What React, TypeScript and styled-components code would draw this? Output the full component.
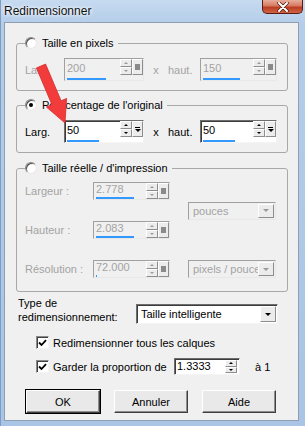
import React from 'react'
import styled, { createGlobalStyle } from 'styled-components'

const GlobalStyle = createGlobalStyle`
  html, body {
    margin: 0;
    padding: 0;
  }
  body {
    width: 305px;
    height: 426px;
    overflow: hidden;
    font-family: "Liberation Sans", Arial, sans-serif;
    font-size: 11px;
    color: #000;
  }
`

const GREY = '#a3a3a3'

const Window = styled.div`
  position: relative;
  width: 305px;
  height: 426px;
  box-sizing: border-box;
  display: flex;
  flex-direction: column;
  border-left: 1px solid #7f9dc4;
  background: linear-gradient(180deg, #c6daf0 0px, #b4cde9 24px, #a9c4e4 100%);
`

const TitleBar = styled.div`
  height: 22px;
  display: flex;
  align-items: flex-start;
  padding-left: 3px;
`

const Title = styled.span`
  font-size: 12px;
  line-height: 14px;
  padding-top: 4px;
  color: #111;
  text-shadow: 0 0 5px #fff, 0 0 3px #fff;
`

const CloseButton = styled.div`
  margin-left: auto;
  margin-right: 2px;
  width: 41px;
  height: 14px;
  box-sizing: border-box;
  border: 1px solid #5a1d14;
  border-top: none;
  border-radius: 0 0 5px 5px;
  background: linear-gradient(180deg, #e8ad9b 0%, #d67a61 45%, #bb3d22 55%, #cf6246 100%);
  display: flex;
  align-items: center;
  justify-content: center;
`

const Client = styled.div`
  flex: 1;
  margin: 0 6px 5px 3px;
  border: 1px solid #8e9fb3;
  background: #f0f0f0;
  padding: 13px 10px 0 11px;
  display: flex;
  flex-direction: column;
`

const Group = styled.fieldset<{ $top: number; $bottom: number }>`
  margin: ${({ $top }) => $top}px 0 0;
  padding: 0 8px ${({ $bottom }) => $bottom}px 8px;
  border: 1px solid #a8a8a8;
  border-radius: 3px;
  min-width: 0;
`

const Legend = styled.legend<{ $pad: number }>`
  display: flex;
  align-items: center;
  gap: 5px;
  height: 14px;
  line-height: 14px;
  padding: 0 4px 0 0;
  margin-bottom: ${({ $pad }) => $pad}px;
`

const PairRow = styled.div`
  display: grid;
  grid-template-columns: 39px 80px 24px 32px 77px;
  align-items: center;
`

const PrintGrid = styled.div`
  display: grid;
  grid-template-columns: 68px 77px 18px 88px;
  grid-template-rows: 18px 18px 18px;
  row-gap: 21px;
  align-items: center;
`

const Label = styled.span<{ $off?: boolean }>`
  color: ${({ $off }) => ($off ? GREY : '#000')};
  white-space: nowrap;
`

const Times = styled(Label)`
  text-align: center;
`

const SpinBox = styled.div<{ $off?: boolean; $w: number; $h: number }>`
  width: ${({ $w }) => $w}px;
  height: ${({ $h }) => $h}px;
  box-sizing: border-box;
  display: flex;
  align-items: flex-start;
  border: 1px solid;
  border-color: ${({ $off }) => ($off ? '#a0a0a0 #e8e8e8 #e8e8e8 #a0a0a0' : '#6d6d6d #f4f4f4 #f4f4f4 #6d6d6d')};
  box-shadow: ${({ $off }) => ($off ? 'none' : 'inset 1px 1px 0 #3c3c3c')};
  background: ${({ $off }) => ($off ? '#f0f0f0' : '#fff')};
`

const TextPart = styled.div`
  flex: 1;
  align-self: stretch;
  display: flex;
  flex-direction: column;
  padding-left: 2px;
`

const Value = styled.span<{ $off?: boolean; $lh: number }>`
  line-height: ${({ $lh }) => $lh}px;
  color: ${({ $off }) => ($off ? GREY : '#000')};
`

const Bar = styled.div`
  margin-top: auto;
  height: 2px;
  background: #3399ff;
`

const SpinColumn = styled.div`
  width: 12px;
  height: 16px;
  display: flex;
  flex-direction: column;
`

const FaceButton = styled.div`
  flex: 1;
  box-sizing: border-box;
  display: flex;
  align-items: center;
  justify-content: center;
  background: #ececec;
  border: 1px solid;
  border-color: #fff #8d8d8d #8d8d8d #fff;
`

const SideButton = styled(FaceButton)`
  flex: none;
  width: 11px;
  height: 16px;
  flex-direction: column;
  gap: 1px;
`

const Tri = styled.span<{ $up?: boolean; $off?: boolean; $size?: number }>`
  width: 0;
  height: 0;
  border-left: ${({ $size = 2 }) => $size}px solid transparent;
  border-right: ${({ $size = 2 }) => $size}px solid transparent;
  ${({ $up, $off, $size = 2 }) =>
    $up
      ? `border-bottom: ${$size}px solid ${$off ? '#9a9a9a' : '#000'};`
      : `border-top: ${$size}px solid ${$off ? '#9a9a9a' : '#000'};`}
`

const Dash = styled.span`
  width: 5px;
  height: 1px;
  background: #000;
`

const Dot = styled.span`
  width: 5px;
  height: 6px;
  background: #8a8a8a;
`

const Combo = styled.div<{ $off?: boolean; $h: number }>`
  height: ${({ $h }) => $h}px;
  box-sizing: border-box;
  display: flex;
  align-items: stretch;
  border: 1px solid;
  border-color: ${({ $off }) => ($off ? '#a0a0a0 #e8e8e8 #e8e8e8 #a0a0a0' : '#6d6d6d #f4f4f4 #f4f4f4 #6d6d6d')};
  box-shadow: ${({ $off }) => ($off ? 'none' : 'inset 1px 1px 0 #3c3c3c')};
  background: ${({ $off }) => ($off ? '#f0f0f0' : '#fff')};
  overflow: hidden;
`

const ComboText = styled.span<{ $off?: boolean }>`
  flex: 1;
  display: flex;
  align-items: center;
  padding-left: 4px;
  white-space: nowrap;
  overflow: hidden;
  color: ${({ $off }) => ($off ? GREY : '#000')};
`

const ComboButton = styled(FaceButton)`
  flex: none;
  width: 16px;
  margin: 1px 1px 1px 0;
`

const RadioDot = styled.span<{ $on?: boolean }>`
  width: 12px;
  height: 12px;
  box-sizing: border-box;
  border-radius: 50%;
  border: 1px solid;
  border-color: #8a8a8a #e8e8e8 #e8e8e8 #8a8a8a;
  box-shadow: inset 1px 1px 0 #505050;
  background: #fff;
  display: flex;
  align-items: center;
  justify-content: center;
  &::after {
    content: '';
    width: 4px;
    height: 4px;
    border-radius: 50%;
    background: ${({ $on }) => ($on ? '#000' : 'transparent')};
  }
`

const Footer = styled.div`
  display: flex;
  flex-direction: column;
`

const TypeRow = styled.div`
  margin-top: 4px;
  display: grid;
  grid-template-columns: 120px 142px;
  align-items: end;
`

const TypeLabel = styled.span`
  padding-left: 2px;
  line-height: 14px;
`

const CheckRow = styled.div<{ $top: number }>`
  margin-top: ${({ $top }) => $top}px;
  padding-left: 20px;
  height: 17px;
  display: flex;
  align-items: center;
`

const CheckBox = styled.span`
  width: 13px;
  height: 13px;
  box-sizing: border-box;
  border: 1px solid;
  border-color: #8a8a8a #f4f4f4 #f4f4f4 #8a8a8a;
  box-shadow: inset 1px 1px 0 #404040;
  background: #fff;
  margin-right: 4px;
  display: flex;
  align-items: center;
  justify-content: center;
`

const CheckText = styled.span<{ $w?: number }>`
  width: ${({ $w }) => ($w ? `${$w}px` : 'auto')};
  white-space: nowrap;
`

const RatioBox = styled(SpinBox)`
  align-items: stretch;
`

const RatioValue = styled.span`
  flex: 1;
  padding-left: 2px;
  line-height: 15px;
`

const RatioSpin = styled(SpinColumn)`
  height: auto;
  margin: 1px 2px 1px 0;
`

const Suffix = styled.span`
  margin-left: 15px;
`

const Buttons = styled.div`
  margin-top: 15px;
  padding-left: 10px;
  display: flex;
  gap: 14px;
`

const PushButton = styled.button<{ $default?: boolean }>`
  width: 74px;
  height: 23px;
  box-sizing: border-box;
  padding: 0;
  font-family: "Liberation Sans", Arial, sans-serif;
  font-size: 11px;
  color: #000;
  background: #e9e9e9;
  border: 1px solid;
  border-color: #fff #404040 #404040 #fff;
  box-shadow: ${({ $default }) =>
    $default ? '0 0 0 1px #000, inset -1px -1px 0 #8d8d8d' : 'inset -1px -1px 0 #8d8d8d'};
`

const Overlay = styled.svg`
  position: absolute;
  left: 0;
  top: 0;
  pointer-events: none;
`

function SpinField({ value, off, fill, w, h, popup }: { value: string; off?: boolean; fill: number; w: number; h: number; popup?: boolean }) {
  return (
    <SpinBox $off={off} $w={w} $h={h}>
      <TextPart>
        <Value $off={off} $lh={h - 5}>{value}</Value>
        <Bar style={{ width: fill }} />
      </TextPart>
      <SpinColumn>
        <FaceButton><Tri $up $off={off} /></FaceButton>
        <FaceButton><Tri $off={off} /></FaceButton>
      </SpinColumn>
      <SideButton>
        {popup ? (
          <>
            <Dash />
            <Tri $size={3} />
          </>
        ) : (
          <Dot />
        )}
      </SideButton>
    </SpinBox>
  )
}

function Dropdown({ text, off, h }: { text: string; off?: boolean; h: number }) {
  return (
    <Combo $off={off} $h={h}>
      <ComboText $off={off}>{text}</ComboText>
      <ComboButton>
        <Tri $off={off} $size={3.5} />
      </ComboButton>
    </Combo>
  )
}

function Check({ children, top, w, extra }: { children: React.ReactNode; top: number; w?: number; extra?: React.ReactNode }) {
  return (
    <CheckRow $top={top}>
      <CheckBox>
        <svg width="9" height="8" viewBox="0 0 9 8">
          <path d="M1 3.5 L3.5 6 L8 1.2" fill="none" stroke="#000" strokeWidth="1.8" />
        </svg>
      </CheckBox>
      <CheckText $w={w}>{children}</CheckText>
      {extra}
    </CheckRow>
  )
}

export default function App() {
  return (
    <Window>
      <GlobalStyle />
      <TitleBar>
        <Title>Redimensionner</Title>
        <CloseButton>
          <svg width="12" height="10" viewBox="0 0 12 10">
            <path d="M2 1 L10 9 M10 1 L2 9" stroke="#4a1a12" strokeWidth="3.4" strokeLinecap="round" />
            <path d="M2 1 L10 9 M10 1 L2 9" stroke="#fff" strokeWidth="2" strokeLinecap="round" />
          </svg>
        </CloseButton>
      </TitleBar>

      <Client>
        <Group $top={0} $bottom={9}>
          <Legend $pad={8}>
            <RadioDot />
            <span>Taille en pixels</span>
          </Legend>
          <PairRow>
            <Label $off>Larg.</Label>
            <SpinField value="200" off fill={39} w={80} h={23} />
            <Times $off>x</Times>
            <Label $off>haut.</Label>
            <SpinField value="150" off fill={37} w={77} h={23} />
          </PairRow>
        </Group>

        <Group $top={7} $bottom={9}>
          <Legend $pad={8}>
            <RadioDot $on />
            <span>Pourcentage de l'original</span>
          </Legend>
          <PairRow>
            <Label>Larg.</Label>
            <SpinField value="50" fill={32} w={80} h={23} popup />
            <Times>x</Times>
            <Label>haut.</Label>
            <SpinField value="50" fill={32} w={77} h={23} popup />
          </PairRow>
        </Group>

        <Group $top={8} $bottom={13}>
          <Legend $pad={7}>
            <RadioDot />
            <span>Taille réelle / d'impression</span>
          </Legend>
          <PrintGrid>
            <Label $off>Largeur :</Label>
            <SpinField value="2.778" off fill={38} w={77} h={18} />
            <span />
            <div style={{ gridRow: '1 / 3', gridColumn: 4, alignSelf: 'center' }}>
              <Dropdown text="pouces" off h={18} />
            </div>
            <Label $off>Hauteur :</Label>
            <SpinField value="2.083" off fill={38} w={77} h={18} />
            <span />
            <Label $off>Résolution :</Label>
            <SpinField value="72.000" off fill={1} w={77} h={18} />
            <span />
            <Dropdown text="pixels / pouce" off h={18} />
          </PrintGrid>
        </Group>

        <Footer>
          <TypeRow>
            <TypeLabel>
              Type de
              <br />
              redimensionnement:
            </TypeLabel>
            <Dropdown text="Taille intelligente" h={20} />
          </TypeRow>
          <Check top={10}>Redimensionner tous les calques</Check>
          <Check
            top={7}
            w={121}
            extra={
              <>
                <RatioBox $w={66} $h={17}>
                  <RatioValue>1.3333</RatioValue>
                  <RatioSpin>
                    <FaceButton><Tri $up /></FaceButton>
                    <FaceButton><Tri /></FaceButton>
                  </RatioSpin>
                </RatioBox>
                <Suffix>à 1</Suffix>
              </>
            }
          >
            Garder la proportion de
          </Check>
        </Footer>

        <Buttons>
          <PushButton $default>OK</PushButton>
          <PushButton>Annuler</PushButton>
          <PushButton>Aide</PushButton>
        </Buttons>
      </Client>

      <Overlay width="305" height="426" viewBox="0 0 305 426">
        <polygon
          points="44.6,64.1 60.1,100.8 65.6,98.4 64,123 45.4,107 50.9,104.6 35.4,67.9"
          fill="#f23c3c"
          stroke="#d92a2a"
          strokeWidth="0.8"
          strokeLinejoin="round"
        />
      </Overlay>
    </Window>
  )
}
